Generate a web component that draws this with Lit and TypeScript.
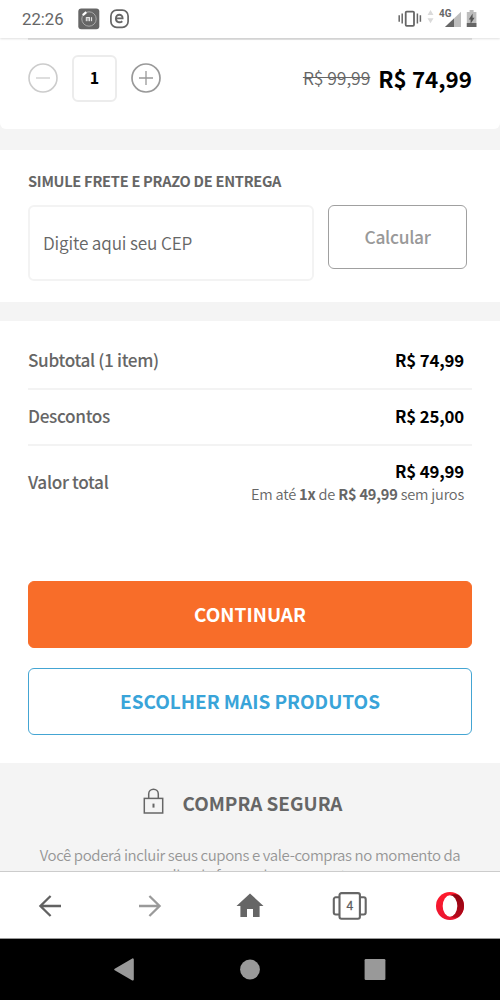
import { LitElement, html, css, svg } from "lit";
import { customElement, property } from "lit/decorators.js";

@customElement("status-bar")
class StatusBar extends LitElement {
  static styles = css`
    :host { display: flex; align-items: center; height: 38px; box-sizing: border-box; padding: 0 22px; background: #fff; box-shadow: 0 1px 2px rgba(0, 0, 0, 0.12); position: relative; z-index: 1; }
    .time { font: 400 16.7px/38px Roboto, sans-serif; color: #666; width: 56px; padding-top: 1px; box-sizing: border-box; height: 38px; }
    svg { display: block; }
    .app { margin-right: 10px; }
    .right { margin-left: auto; margin-right: -1px; }
    .net { font: 700 10.5px Roboto, sans-serif; }
  `;
  render() {
    return html`
      <span class="time">22:26</span>
      <svg class="app" width="22" height="22" viewBox="0 0 22 22">
        <rect x="0.3" y="0.5" width="21" height="20.8" rx="3" fill="#666" />
        <circle cx="11" cy="11" r="7.2" fill="none" stroke="#a8a8a8" stroke-width="1" />
        <path d="M4.8 7.2L8.3 4.2" stroke="#fff" stroke-width="2.2" />
        <path d="M8.3 9.2v4M10 9.2v4M11.6 9.2v4M13.6 9.2v4M8.3 9.6h3.3" stroke="#eee" stroke-width="1" fill="none" />
      </svg>
      <svg width="20" height="20" viewBox="0 0 20 20" fill="none" stroke="#666">
        <rect x="0.9" y="1.1" width="17.2" height="17.2" rx="5.8" stroke-width="1.7" />
        <path d="M6 9.4H12.6C12.8 4.6 5.9 4.4 5.9 9.4C5.9 13.8 10.3 14 12.3 12.2" stroke-width="1.9" />
      </svg>
      <svg class="right" width="82" height="38" viewBox="0 0 82 38">
        <rect x="8.7" y="11.6" width="8.3" height="14.2" rx="1" fill="none" stroke="#666" stroke-width="1.8" />
        <path d="M5.2 13.8v10M2.2 15.6v6.4M20.4 13.8v10M23.4 15.6v6.4" transform="translate(0 -.3)" stroke="#666" stroke-width="1.5" />
        <path d="M33.5 10l3 5h-6zM33.5 23.2l3-5h-6z" fill="#dadada" />
        <text class="net" x="42" y="17.4" fill="#666" textLength="12.4" lengthAdjust="spacingAndGlyphs">4G</text>
        <path d="M64 11.8V27H48z" fill="#bdbdbd" />
        <path d="M57 18.4V27H48z" fill="#666" />
        <path d="M72.6 10h4v2h2.8v15h-9.6V12h2.8z" fill="#bdbdbd" />
        <path d="M69.8 23h9.6v4h-9.6z" fill="#666" />
        <path d="M75.6 13.6v4.2h2l-4 6v-4.4h-1.8z" fill="#555" />
      </svg>
    `;
  }
}

@customElement("summary-row")
class SummaryRow extends LitElement {
  @property() label = "";
  @property() value = "";
  static styles = css`
    :host { display: flex; align-items: center; justify-content: space-between; box-sizing: border-box; padding: 0 8px 2px 0; border-bottom: 2px solid #f3f3f3; height: 56px; }
    .label { font-weight: 500; font-size: 17.2px; line-height: 24px; letter-spacing: -0.35px; color: #666; }
    .side { display: flex; flex-direction: column; align-items: flex-end; }
    .value { font-weight: 700; font-size: 16.8px; line-height: 24px; letter-spacing: -0.14px; color: #000; }
  `;
  render() {
    return html`<span class="label">${this.label}</span>
      <span class="side"><span class="value">${this.value}</span><slot></slot></span>`;
  }
}

@customElement("browser-bar")
class BrowserBar extends LitElement {
  static styles = css`
    :host { display: grid; grid-template-columns: repeat(5, 1fr); justify-items: center; align-items: center; height: 68px; box-sizing: border-box; padding-top: 1px; background: #fff; border-top: 1px solid #ccc; border-bottom: 1px solid #999; }
    svg { display: block; }
    .count { font: 400 12px "Liberation Sans", sans-serif; }
  `;
  render() {
    const arrow = svg`<path d="M24 12H3.5M13.6 2L3.4 12L13.6 22" />`;
    return html`
      <svg width="26" height="24" viewBox="0 0 26 24" fill="none" stroke="#626262" stroke-width="2.3">${arrow}</svg>
      <svg width="26" height="24" viewBox="0 0 26 24" fill="none" stroke="#9a9a9a" stroke-width="2.3"><g transform="translate(26) scale(-1 1)">${arrow}</g></svg>
      <svg width="28" height="26" viewBox="0 0 28 26" fill="#666"><path d="M14 .5L27.5 13H23.6V24H17V16H11V24H4.4V13H0.5z" /></svg>
      <svg width="36" height="30" viewBox="0 0 36 30" fill="none" stroke="#666" stroke-width="2.1">
        <rect x="7.5" y="2.1" width="20.4" height="25.6" rx="2" />
        <path d="M7.5 6.3H3.8a2 2 0 0 0-2 2V21.5a2 2 0 0 0 2 2H7.5M27.9 6.3h3.8a2 2 0 0 1 2 2V21.5a2 2 0 0 1-2 2h-3.8" />
        <text class="count" x="17.9" y="19.2" text-anchor="middle" fill="#555" stroke="#666" stroke-width="0.3">4</text>
      </svg>
      <svg width="30" height="30" viewBox="0 0 30 30">
        <defs>
          <linearGradient id="red" x1="0" y1="0" x2="0" y2="1"><stop offset="0" stop-color="#ff1b2d" /><stop offset="1" stop-color="#ea1530" /></linearGradient>
          <linearGradient id="dark" x1="0" y1="0" x2="0" y2="1"><stop offset="0" stop-color="#8e0410" /><stop offset="1" stop-color="#b80a1c" /></linearGradient>
        </defs>
        <circle cx="15" cy="15" r="14" fill="url(#red)" />
        <path d="M15 4.3C18 2.8 21.5 2.7 24.4 4.6A14 14 0 0 1 24.4 25.4C21.5 27.3 18 27.2 15 25.7z" fill="url(#dark)" />
        <ellipse cx="15" cy="15" rx="7.3" ry="10.7" fill="#fff" />
      </svg>
    `;
  }
}

@customElement("system-nav")
class SystemNav extends LitElement {
  static styles = css`
    :host { display: flex; justify-content: center; align-items: center; height: 61px; box-sizing: border-box; padding-bottom: 1px; background: #000; }
    svg { display: block; }
    .key { width: 125px; display: flex; justify-content: center; }
  `;
  render() {
    return html`
      <div class="key"><svg width="24" height="24" viewBox="0 0 24 24"><path d="M19.8 2.4V22.6L2.2 12.5z" fill="#999" stroke="#999" stroke-width="2" stroke-linejoin="round" /></svg></div>
      <div class="key"><svg width="24" height="24" viewBox="0 0 24 24"><circle cx="12" cy="12.5" r="9.9" fill="#999" /></svg></div>
      <div class="key"><svg width="24" height="24" viewBox="0 0 24 24"><rect x="1.6" y="2.1" width="20.8" height="20.8" rx="1.2" fill="#999" /></svg></div>
    `;
  }
}

@customElement("app-root")
class AppRoot extends LitElement {
  static styles = css`
    :host { display: flex; flex-direction: column; width: 500px; height: 1000px; overflow: hidden; background: #f4f4f4; font-family: "Noto Sans CJK SC", "Noto Sans CJK JP", sans-serif; color: #666; }
    * { box-sizing: border-box; }
    svg { display: block; }
    .page { height: 833px; overflow: hidden; display: flex; flex-direction: column; }
    .page > * { flex-shrink: 0; }
    .item { height: 91px; padding: 0 28px; background: #fff; border-radius: 0 0 6px 6px; }
    .rule { height: 2px; background: #e6e6e6; }
    .item-line { display: flex; align-items: center; height: 76px; }
    .qty { width: 45px; height: 47px; margin: 0 14px; border: 2px solid #ececec; border-radius: 6px; font-weight: 700; font-size: 16px; line-height: 40px; text-align: center; color: #000; }
    .prices { margin-left: auto; display: flex; align-items: center; gap: 8px; line-height: 30px; }
    .old { font-size: 17.6px; font-weight: 350; letter-spacing: -0.07px; text-decoration: line-through; }
    .now { font-size: 22.4px; font-weight: 700; color: #000; }
    .freight { height: 152px; margin-top: 21px; padding: 19px 33px 0 28px; background: #fff; }
    .heading { font-size: 14.6px; line-height: 24px; font-weight: 700; letter-spacing: -0.27px; margin: 0; }
    .form { display: flex; align-items: flex-start; gap: 14px; margin-top: 12px; }
    .cep { width: 286px; height: 76px; border: 2px solid #f3f3f3; border-radius: 6px; padding-left: 13px; font-size: 17.2px; font-weight: 350; letter-spacing: -0.16px; line-height: 72px; }
    .calc { flex: 1; height: 64px; border: 1.5px solid #a0a0a0; border-radius: 6px; text-align: center; font-size: 17.4px; font-weight: 500; letter-spacing: -0.3px; line-height: 61px; color: #999; }
    .summary { height: 442px; margin-top: 19px; padding: 13px 28px 0; background: #fff; }
    .total { height: 76px; border: 0; padding-bottom: 4px; }
    .note { font-size: 14.6px; line-height: 22px; font-weight: 350; letter-spacing: -0.2px; }
    .note b { font-weight: 700; }
    .btn { height: 67px; border-radius: 6px; text-align: center; font-weight: 700; font-size: 19px; line-height: 63px; }
    .go { margin-top: 59px; background: #f86d29; color: #fff; border: 1px solid #f86d29; }
    .more { margin-top: 20px; border: 1.5px solid #44a5d3; color: #39a4d9; letter-spacing: -0.04px; }
    .safe { padding-top: 24px; text-align: center; }
    .safe-title { display: flex; justify-content: center; align-items: center; gap: 18px; height: 30px; font-size: 18.9px; font-weight: 700; padding-right: 15px; }
    .safe-text { margin: 28px 30px 0; font-size: 15px; font-weight: 350; letter-spacing: -0.38px; line-height: 20px; color: #969696; }
  `;
  render() {
    return html`
      <status-bar></status-bar>
      <main class="page">
        <section class="item">
          <div class="rule"></div>
          <div class="item-line">
            <svg width="30" height="30" viewBox="0 0 30 30" fill="none" stroke="#ccc"><circle cx="15" cy="15" r="14" stroke-width="1.6" /><path d="M8 15h14" stroke-width="1.3" /></svg>
            <div class="qty">1</div>
            <svg width="30" height="30" viewBox="0 0 30 30" fill="none" stroke="#999"><circle cx="15" cy="15" r="14" stroke-width="1.7" /><path d="M8 15h14M15 8v14" stroke-width="1.3" /></svg>
            <div class="prices"><span class="old">R$ 99,99</span><span class="now">R$ 74,99</span></div>
          </div>
        </section>
        <section class="freight">
          <h2 class="heading">SIMULE FRETE E PRAZO DE ENTREGA</h2>
          <div class="form">
            <div class="cep">Digite aqui seu CEP</div>
            <div class="calc">Calcular</div>
          </div>
        </section>
        <section class="summary">
          <summary-row label="Subtotal (1 item)" value="R$ 74,99"></summary-row>
          <summary-row label="Descontos" value="R$ 25,00"></summary-row>
          <summary-row class="total" label="Valor total" value="R$ 49,99"><span class="note">Em até <b>1x</b> de <b>R$ 49,99</b> sem juros</span></summary-row>
          <div class="btn go">CONTINUAR</div>
          <div class="btn more">ESCOLHER MAIS PRODUTOS</div>
        </section>
        <section class="safe">
          <div class="safe-title">
            <svg width="22" height="28" viewBox="0 0 22 28" fill="none" stroke="#666" stroke-width="1.5"><rect x="1.3" y="10.4" width="18.4" height="14.6" /><path d="M5.7 10.4V6a4.8 4.8 0 0 1 9.6 0V10.4" /><path d="M10.5 15.6v4" stroke-width="2" /></svg>
            <span>COMPRA SEGURA</span>
          </div>
          <p class="safe-text">Você poderá incluir seus cupons e vale-compras no momento da escolha da forma de pagamento.</p>
        </section>
      </main>
      <browser-bar></browser-bar>
      <system-nav></system-nav>
    `;
  }
}
